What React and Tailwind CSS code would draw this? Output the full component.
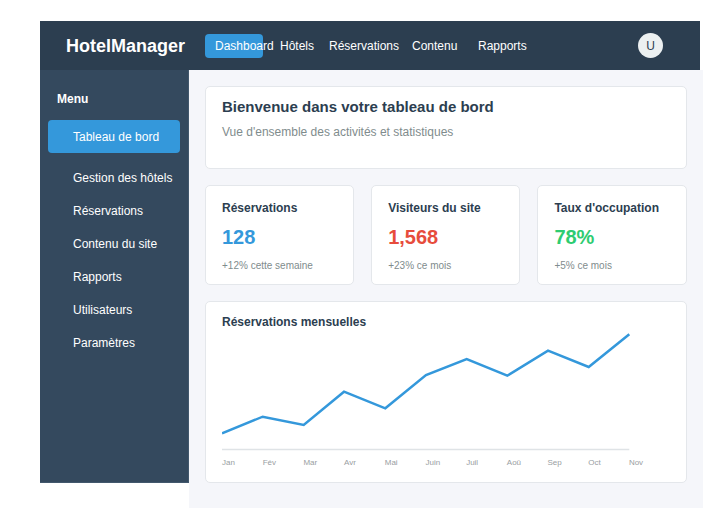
import React from "react";

const points = [
  [0, 103.3], [40.7, 86.7], [81.7, 95], [122, 61.7], [163.3, 78.3], [204, 45],
  [244.7, 29], [285.3, 45.7], [326, 20.7], [366.7, 37], [407.3, 4.3],
];
const months = ["Jan", "Fév", "Mar", "Avr", "Mai", "Juin", "Juil", "Aoû", "Sep", "Oct", "Nov"];

function StatCard({ label, value, valueClass, note }) {
  return (
    <div className="bg-white border border-[#e4e7eb] rounded-[5px] h-[100px] px-4 pt-[14px]">
      <div className="text-[12px] leading-4 font-bold text-[#2c3e50]">{label}</div>
      <div className={`text-[20px] leading-6 font-bold mt-[9px] ${valueClass}`}>{value}</div>
      <div className="text-[10px] leading-[14px] text-[#7f8c8d] mt-[10px]">{note}</div>
    </div>
  );
}

export default function App() {
  return (
    <div className="bg-white h-[508px] overflow-hidden pt-[21px] font-['Liberation_Sans',Arial,sans-serif]">
      <div className="ml-[40px] w-[660px]">
        <header className="h-[49px] bg-[#2c3e50] flex items-center pl-[26px] pr-[37px]">
          <div className="text-white font-bold text-[18px] leading-6 w-[139px]">HotelManager</div>
          <nav className="flex items-center text-white text-[12px] leading-4">
            <div className="w-[75px]">
              <div className="w-[58px] h-[24px] bg-[#3498db] rounded-[4px] pl-[10px] flex items-center whitespace-nowrap">Dashboard</div>
            </div>
            <div className="w-[49px] whitespace-nowrap">Hôtels</div>
            <div className="w-[83px] whitespace-nowrap">Réservations</div>
            <div className="w-[66px] whitespace-nowrap">Contenu</div>
            <div className="whitespace-nowrap">Rapports</div>
          </nav>
          <div className="ml-auto w-[25px] h-[25px] rounded-full bg-[#ecf0f1] text-[#2c3e50] text-[12px] flex items-center justify-center">U</div>
        </header>
        <div className="flex h-[438px]">
          <aside className="w-[149px] h-[413px] bg-[#34495e] border-r border-b border-[#42586d] px-2 pt-[21px] shrink-0">
            <div className="text-white font-bold text-[12px] leading-4 pl-[9px]">Menu</div>
            <div className="mt-[13px] h-[33px] bg-[#3498db] rounded-[4px] text-white text-[12px] flex items-center pl-[25px]">Tableau de bord</div>
            <div className="mt-[8px] flex flex-col text-white text-[12px]">
              {["Gestion des hôtels", "Réservations", "Contenu du site", "Rapports", "Utilisateurs", "Paramètres"].map((t) => (
                <div key={t} className="h-[33px] flex items-center pl-[25px]">{t}</div>
              ))}
            </div>
          </aside>
          <main className="flex-1 bg-[#f5f6fa] p-4">
            <div className="bg-white border border-[#e4e7eb] rounded-[5px] h-[83px] px-4 pt-[11px]">
              <div className="text-[15px] leading-[18px] font-bold text-[#2c3e50]">Bienvenue dans votre tableau de bord</div>
              <div className="text-[12px] leading-4 text-[#7f8c8d] mt-[8px]">Vue d'ensemble des activités et statistiques</div>
            </div>
            <div className="grid grid-cols-3 gap-[17px] mt-4">
              <StatCard label="Réservations" value="128" valueClass="text-[#3498db]" note="+12% cette semaine" />
              <StatCard label="Visiteurs du site" value="1,568" valueClass="text-[#e74c3c]" note="+23% ce mois" />
              <StatCard label="Taux d'occupation" value="78%" valueClass="text-[#2ecc71]" note="+5% ce mois" />
            </div>
            <div className="bg-white border border-[#e4e7eb] rounded-[5px] h-[182px] mt-4 px-4 pt-[12px]">
              <div className="text-[12px] leading-4 font-bold text-[#2c3e50]">Réservations mensuelles</div>
              <svg width="420" height="122" className="block">
                <line x1="0" y1="119.5" x2="407.3" y2="119.5" stroke="#dfe3e6" strokeWidth="1.5" />
                <polyline
                  points={points.map((p) => p.join(",")).join(" ")}
                  fill="none"
                  stroke="#3498db"
                  strokeWidth="2.5"
                  strokeLinejoin="miter"
                />
              </svg>
              <div className="flex mt-[6px] text-[8px] leading-[10px] text-[#999ea2]">
                {months.map((m) => (
                  <div key={m} className="w-[40.7px] shrink-0">{m}</div>
                ))}
              </div>
            </div>
          </main>
        </div>
      </div>
    </div>
  );
}
